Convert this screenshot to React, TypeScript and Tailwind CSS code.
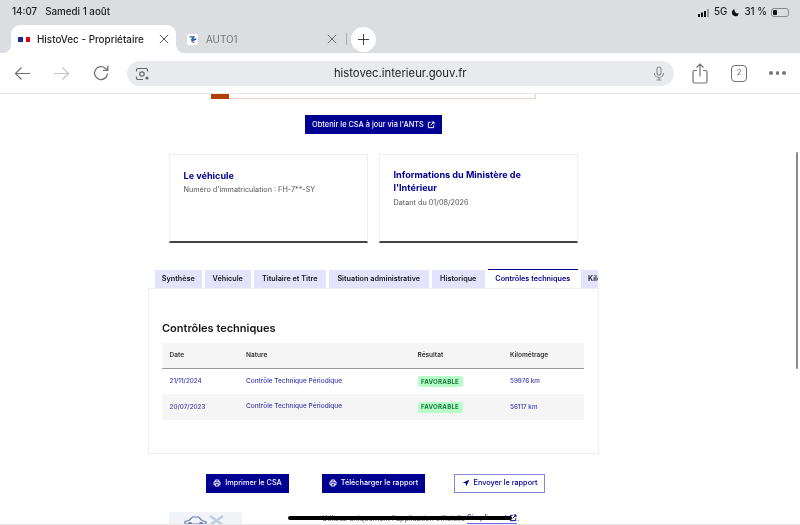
import React from "react";

const M = "[font-family:Inter,'Liberation_Sans',sans-serif]";

function Printer() {
  return (
    <svg width="8" height="8" viewBox="0 0 24 24" fill="none" stroke="currentColor" strokeWidth="3" className="shrink-0">
      <path d="M7 8V3h10v5" />
      <path d="M7 17H3V8.500h18V17h-4" />
      <path d="M7 14h10v7H7z" />
    </svg>
  );
}

function ExternalIcon({ cls = "" }: { cls?: string }) {
  return (
    <svg width="8" height="8" viewBox="0 0 24 24" fill="none" stroke="currentColor" strokeWidth="3" className={cls}>
      <path d="M11 4H4v16h16v-7" />
      <path d="M14 3h7v7M21 3 11 13" />
    </svg>
  );
}

const tabs = [
  { t: "Synthèse", c: "w-[46.5px]" },
  { t: "Véhicule", c: "w-[45.5px]" },
  { t: "Titulaire et Titre", c: "w-[71.5px]" },
  { t: "Situation administrative", c: "w-[99.5px]" },
  { t: "Historique", c: "w-[52.5px]" },
];

function Row({ date, km, shaded }: { date: string; km: string; shaded?: boolean }) {
  return (
    <div className={`flex items-center h-[25.5px] pt-[1px] font-medium text-[#3a3aa8] ${shaded ? "bg-[#f5f5f5]" : "bg-white"}`}>
      <div className="w-[84px] pl-[7.5px] text-[6.3px]">{date}</div>
      <div className="w-[171.5px] text-[6.5px]">Contrôle Technique Périodique</div>
      <div className="w-[92.5px] flex items-center">
        <span className="flex items-center justify-center w-[45px] h-[11px] rounded-[2px] bg-[#b8fec9] text-[#18753c] text-[6.2px] font-bold tracking-[0.2px] leading-none">FAVORABLE</span>
      </div>
      <div className="text-[6.3px]">{km}</div>
    </div>
  );
}

export default function App() {
  return (
    <div className={`relative w-[800px] h-[525px] overflow-hidden bg-white flex flex-col blur-[0.3px] ${M}`}>
      {/* status bar + tabs */}
      <div className="h-[53px] bg-[#dcdde1] shrink-0 flex flex-col">
        <div className="h-[25px] flex items-center justify-between pl-[12px] pr-[11px] text-[#1c1c1e] text-[9.8px] font-medium">
          <div className="flex gap-[8px]"><span>14:07</span><span>Samedi 1 août</span></div>
          <div className="flex items-center gap-[4px]">
            <svg width="12" height="8" viewBox="0 0 12 8"><rect x="0" y="5" width="2" height="3" fill="#111"/><rect x="3" y="3.5" width="2" height="4.5" fill="#111"/><rect x="6" y="2" width="2" height="6" fill="#111"/><rect x="9" y="0" width="2" height="8" fill="#999"/></svg>
            <span>5G</span>
            <svg width="9" height="9" viewBox="0 0 24 24" fill="#111"><path d="M21 14.5A9.5 9.5 0 0 1 9.5 3a9.5 9.5 0 1 0 11.5 11.5z"/></svg>
            <span>31 %</span>
            <div className="relative w-[18px] h-[9px] rounded-[3px] border border-[#8a8a8e] p-[1px]"><div className="w-[4px] h-full rounded-[1px] bg-[#111]"/></div>
          </div>
        </div>
        <div className="flex items-end h-[28px] pl-[11px]">
          <div className="relative w-[165px] h-[28px] bg-white rounded-t-[9px] flex items-center pl-[7px] pr-[7px] text-[9.9px] text-[#222]">
            <svg className="absolute left-[-8px] bottom-0" width="8" height="8" viewBox="0 0 8 8"><path d="M8 0v8H0a8 8 0 0 0 8-8z" fill="#fff"/></svg>
            <svg className="absolute right-[-8px] bottom-0" width="8" height="8" viewBox="0 0 8 8"><path d="M0 0v8h8a8 8 0 0 1-8-8z" fill="#fff"/></svg>
            <div className="w-[12px] h-[5px] flex mr-[7px]"><span className="w-[4.5px] bg-[#1c2c8a]"/><span className="w-[3px] bg-white"/><span className="w-[4.5px] bg-[#e1000f]"/></div>
            <span className="font-medium">HistoVec - Propriétaire</span>
            <svg className="ml-auto" width="10" height="10" viewBox="0 0 12 12" stroke="#333" strokeWidth="1"><path d="M1 1l10 10M11 1 1 11"/></svg>
          </div>
          <div className="w-[170px] h-[28px] flex items-center pl-[11px] pr-[9px] text-[9.9px] text-[#77777b]">
            <div className="w-[11px] h-[11px] rounded-[2px] bg-white flex items-center justify-center mr-[8px]">
              <svg width="9" height="9" viewBox="0 0 12 12" fill="none" stroke="#2a5d9c" strokeWidth="1.6"><path d="M2 2.500h6L5 5.500h6L5 8l3 2.500"/></svg>
            </div>
            <span>AUTO1</span>
            <svg className="ml-auto" width="10" height="10" viewBox="0 0 12 12" stroke="#555" strokeWidth="1"><path d="M1 1l10 10M11 1 1 11"/></svg>
          </div>
          <div className="w-px h-[12px] bg-[#aaa] self-center mr-[3.5px]"/>
          <div className="w-[25px] h-[25px] rounded-full bg-white flex items-center justify-center self-center">
            <svg width="11" height="11" viewBox="0 0 12 12" stroke="#333" strokeWidth="1"><path d="M6 0v12M0 6h12"/></svg>
          </div>
        </div>
      </div>
      {/* toolbar */}
      <div className="h-[41px] shrink-0 bg-white border-b border-[#ebebeb] flex items-center pl-[14px] pr-[14px]">
        <svg width="17" height="15" viewBox="0 0 17 15" fill="none" stroke="#6f7276" strokeWidth="1.2"><path d="M16 7.5H1M7.5 1.5l-6 6 6 6"/></svg>
        <svg className="ml-[22px]" width="17" height="15" viewBox="0 0 17 15" fill="none" stroke="#c3c5c8" strokeWidth="1.2"><path d="M1 7.5h15M9.5 1.5l6 6-6 6"/></svg>
        <svg className="ml-[22px]" width="18" height="18" viewBox="0 0 18 18" fill="none" stroke="#6f7276" strokeWidth="1.3"><path d="M15.5 9.5A6.5 6.5 0 1 1 13.3 4.2L15.5 6"/><path d="M15.8 1.5V6.3H11"/></svg>
        <div className="ml-[17px] w-[547px] h-[25px] rounded-full bg-[#e8eaed] relative flex items-center justify-center text-[11.3px] text-[#222]">
          <svg className="absolute left-[8px] top-[6px]" width="14" height="14" viewBox="0 0 14 14" fill="none" stroke="#666" strokeWidth="1.2"><path d="M1.5 4.5V3a1.5 1.5 0 0 1 1.5-1.5h8A1.5 1.5 0 0 1 12.5 3v1.5M1.5 9.500V11A1.500 1.500 0 0 0 3 12.500h5"/><circle cx="7" cy="7" r="2.200"/><circle cx="12" cy="11" r="1" fill="#666"/></svg>
          <span>histovec.interieur.gouv.fr</span>
          <svg className="absolute right-[8px] top-[5px]" width="14" height="15" viewBox="0 0 14 15" fill="none" stroke="#888" strokeWidth="1.100"><rect x="5" y="1" width="4" height="8" rx="2"/><path d="M2.500 7a4.500 4.500 0 0 0 9 0M7 11.500V14M4.500 14h5"/></svg>
        </div>
        <svg className="ml-[18px]" width="16" height="21" viewBox="0 0 16 21" fill="none" stroke="#6f7276" strokeWidth="1.200"><path d="M5 7.500H2.500A1.500 1.500 0 0 0 1 9v9.500A1.500 1.500 0 0 0 2.500 20h11a1.500 1.500 0 0 0 1.500-1.500V9a1.500 1.500 0 0 0-1.500-1.500H11M8 13.500V1M4.500 4.500 8 1l3.500 3.500"/></svg>
        <div className="ml-[23px] w-[17px] h-[17px] rounded-[4px] border-[1.3px] border-[#6f7276] flex items-center justify-center text-[7.5px] text-[#666]">2</div>
        <div className="ml-[22px] flex gap-[3px]"><span className="w-[3.500px] h-[3.500px] rounded-full bg-[#777]"/><span className="w-[3.500px] h-[3.500px] rounded-full bg-[#777]"/><span className="w-[3.500px] h-[3.500px] rounded-full bg-[#777]"/></div>
      </div>
      {/* page */}
      <div className="flex-1 relative overflow-hidden flex flex-col items-start pl-[148px]">
        <div className="ml-[63px] w-[325px] h-[5px] border-b border-r border-[#ecd0c2] relative shrink-0">
          <div className="absolute left-0 top-0 w-[18px] h-[5px] bg-[#b34000]"/>
        </div>
        <div className="mt-[16px] ml-[157px] w-[137px] h-[19px] bg-[#000091] text-[#f5f5fe] text-[7.4px] font-medium flex items-center justify-center gap-[3px] shrink-0">
          Obtenir le CSA à jour via l'ANTS <ExternalIcon />
        </div>
        {/* cards */}
        <div className="mt-[19.5px] ml-[21px] flex gap-[11px] shrink-0">
          <div className="w-[199px] h-[89px] bg-white border border-[#eee] border-b-2 border-b-[#444] pt-[14px] pl-[13.5px]">
            <div className="text-[9.1px] font-bold text-[#000091] leading-[13px]">Le véhicule</div>
            <div className="mt-[2px] text-[7.25px] text-[#555] leading-[12px]">Numéro d'immatriculation : FH-7**-SY</div>
          </div>
          <div className="w-[199px] h-[89px] bg-white border border-[#eee] border-b-2 border-b-[#444] pt-[14.5px] pl-[13.5px] pr-[40px]">
            <div className="text-[9.1px] font-bold text-[#000091] leading-[12.7px]">Informations du Ministère de l'Intérieur</div>
            <div className="mt-[3px] text-[7.25px] text-[#555] leading-[12px]">Datant du 01/08/2026</div>
          </div>
        </div>
        {/* tabs */}
        <div className="mt-[26.5px] ml-[7px] w-[443px] h-[19px] flex gap-[3.5px] overflow-hidden items-end shrink-0">
          {tabs.map((x) => (
            <div key={x.t} className={`h-[18px] ${x.c} bg-[#e3e3fd] text-[#161616] text-[7.25px] font-semibold flex items-center justify-center whitespace-nowrap shrink-0`}>{x.t}</div>
          ))}
          <div className="h-[19px] w-[89.5px] bg-white border-t border-[#000091] text-[#000091] text-[7.25px] font-semibold flex items-center justify-center whitespace-nowrap shrink-0">Contrôles techniques</div>
          <div className="h-[18px] pl-[7px] bg-[#e3e3fd] text-[#161616] text-[7.25px] font-semibold flex items-center whitespace-nowrap shrink-0">Kilométrage</div>
        </div>
        {/* panel */}
        <div className="w-[451px] h-[166px] border border-[#eee] px-[13px] pt-[31.5px] shrink-0">
          <div className="text-[11px] font-semibold text-[#161616] leading-[15px]">Contrôles techniques</div>
          <div className="mt-[7px] w-[422px]">
            <div className="flex items-center h-[26px] pt-[1px] bg-[#f5f5f5] border-b border-[#9a9a9a] text-[6.5px] font-semibold text-[#333]">
              <div className="w-[84px] pl-[7.5px]">Date</div>
              <div className="w-[171.5px]">Nature</div>
              <div className="w-[92.5px]">Résultat</div>
              <div>Kilométrage</div>
            </div>
            <Row date="21/11/2024" km="59976 km" />
            <Row date="20/07/2023" km="56117 km" shaded />
          </div>
        </div>
        {/* buttons */}
        <div className="mt-[20px] ml-[58px] flex items-center shrink-0">
          <div className="w-[83px] h-[18.5px] bg-[#000091] text-[#f5f5fe] text-[7.3px] font-medium flex items-center justify-center gap-[4px]"><Printer />Imprimer le CSA</div>
          <div className="ml-[33px] w-[103px] h-[18.5px] bg-[#000091] text-[#f5f5fe] text-[7.3px] font-medium flex items-center justify-center gap-[4px]"><Printer />Télécharger le rapport</div>
          <div className="ml-[29px] w-[91px] h-[18.5px] bg-white border border-[#8585d6] text-[#000091] text-[7.3px] font-medium flex items-center justify-center gap-[4px]">
            <svg width="8" height="8" viewBox="0 0 24 24" fill="#000091"><path d="M22 2 2 11l9 2 2 9z"/></svg>Envoyer le rapport
          </div>
        </div>
        {/* bottom */}
        <div className="mt-[19.5px] ml-[21px] flex items-start shrink-0">
          <div className="w-[73px] h-[20px] bg-[#f3f4f8] flex items-start pl-[15px] pt-[3px] gap-[1px]">
            <svg width="23" height="11" viewBox="0 0 23 11" fill="none" stroke="#6b7db3" strokeWidth="1.2"><path d="M1 9V6.500l4-1 3.500-3.500h6l3.500 3.500 4 1.500V9z"/><circle cx="6" cy="9" r="1.500" fill="#6b7db3"/><circle cx="17" cy="9" r="1.500" fill="#6b7db3"/></svg>
            <svg width="17" height="11" viewBox="0 0 17 11" fill="none" stroke="#c0cbe5" strokeWidth="2.5"><path d="M2 1l13 9M15 1 2 10"/></svg>
          </div>
          <div className="ml-[80px] flex items-center text-[7.3px] text-[#555] leading-[11px] whitespace-nowrap">
            <span>Utilisez uniquement l'application officielle&nbsp;</span>
            <span className="text-[#000091] border-b border-[#6a6af4] flex items-center gap-[2px]">Simplimmat<ExternalIcon /></span>
            <span>.</span>
          </div>
        </div>
      </div>
      {/* overlays */}
      <div className="absolute left-[288px] top-[516px] w-[224px] h-[4px] rounded-full bg-black"/>
      <div className="absolute left-0 bottom-0 w-[800px] h-px bg-[#e8e8e8]"/>
      <div className="absolute left-[796px] top-[152px] w-[2px] h-[217px] rounded-full bg-[#8c8c8c]"/>
    </div>
  );
}
